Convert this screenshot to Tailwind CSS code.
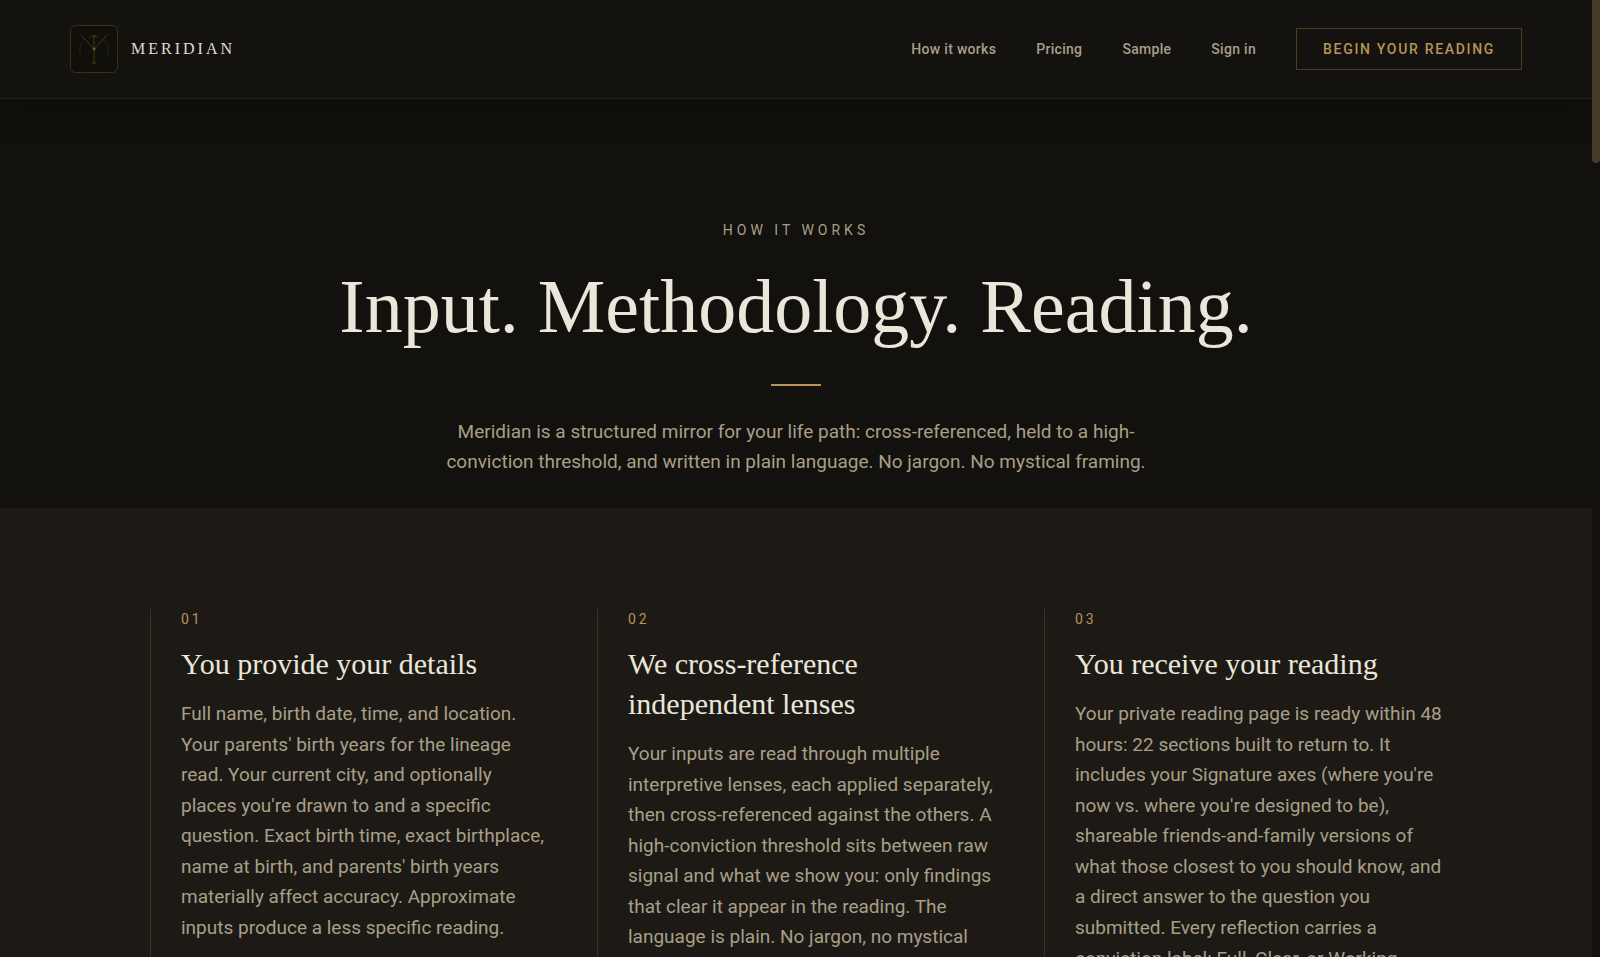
<!DOCTYPE html>
<html lang="en">
<head>
    <meta charset="UTF-8">
    <meta name="viewport" content="width=device-width, initial-scale=1.0">
    <title>Meridian - How it works</title>
    <script src="https://cdn.jsdelivr.net/npm/@tailwindcss/browser@4"></script>
</head>
<body class="bg-[#12110d] text-[#a89f88] font-['Roboto',sans-serif] h-screen overflow-hidden flex">
    <div class="flex-1 min-w-0">
        <header class="flex items-center justify-between px-[70px] py-[25px] bg-[#13120e] border-b border-[#23211b] shadow-[0_8px_32px_rgba(0,0,0,0.3)]">
            <a href="#" class="flex items-center gap-[13px]">
                <span class="w-12 h-12 rounded-md border border-[#353024] bg-[#110f0a] shadow-[0_0_24px_rgba(60,40,5,0.2)] flex items-center justify-center">
                    <svg class="w-9 h-9" viewBox="0 0 36 36" fill="none" stroke="#403a12" stroke-linecap="round">
                        <path d="M8 8.500A14 14 0 0 0 5 25M28 8.500A14 14 0 0 1 31 25" stroke="#252212"/>
                        <path d="M13 6A14 14 0 0 1 23 6" stroke="#252212"/>
                        <path d="M18 4V32M16 32H20M16 5H20"/>
                        <path d="M5 4L18 18L31 4"/>
                        <circle cx="18" cy="18" r="1" fill="#6e6214" stroke="#6e6214"/>
                    </svg>
                </span>
                <span class="font-['Liberation_Serif',serif] text-base tracking-[3px] text-[#e0dccf]">MERIDIAN</span>
            </a>
            <nav class="flex items-center gap-10 text-sm font-medium tracking-[0.3px]">
                <a href="#how">How it works</a>
                <a href="#pricing">Pricing</a>
                <a href="#sample">Sample</a>
                <a href="#signin">Sign in</a>
                <button type="button" class="h-[42px] px-[26px] border border-[#4a3d22] text-[#b8935a] text-sm font-medium tracking-[0.12em]">BEGIN YOUR READING</button>
            </nav>
        </header>

        <main>
            <section id="how" class="flex flex-col items-center text-center pt-[121px] pb-[31px]">
                <p class="text-sm leading-5 tracking-[4px]">HOW IT WORKS</p>
                <h1 class="mt-6 font-['Liberation_Serif',serif] text-[76px] leading-[84px] text-[#ebe6da]">Input. Methodology. Reading.</h1>
                <div class="mt-9 w-[50px] h-[2px] bg-[#b8935a]"></div>
                <p class="mt-[31px] max-w-[720px] text-[19px] leading-[30px]">Meridian is a structured mirror for your life path: cross-referenced, held to a high-conviction threshold, and written in plain language. No jargon. No mystical framing.</p>
            </section>

            <section class="bg-[#1d1a15] pt-[101px] pb-24 px-8">
                <div class="max-w-[1292px] mx-auto grid grid-cols-3 gap-[49px]">
                    <article class="border-l border-[#3a3424] pl-[30px]">
                        <p class="text-sm leading-5 tracking-[3px] text-[#b8935a]">01</p>
                        <h2 class="mt-[15px] font-['Liberation_Serif',serif] text-[30px] leading-10 text-[#ebe6da]">You provide your details</h2>
                        <p class="mt-[15px] text-[19px] leading-[1.61]">Full name, birth date, time, and location. Your parents' birth years for the lineage read. Your current city, and optionally places you're drawn to and a specific question. Exact birth time, exact birthplace, name at birth, and parents' birth years materially affect accuracy. Approximate inputs produce a less specific reading.</p>
                    </article>
                    <article class="border-l border-[#3a3424] pl-[30px]">
                        <p class="text-sm leading-5 tracking-[3px] text-[#b8935a]">02</p>
                        <h2 class="mt-[15px] font-['Liberation_Serif',serif] text-[30px] leading-10 text-[#ebe6da]">We cross-reference independent lenses</h2>
                        <p class="mt-[15px] text-[19px] leading-[1.61]">Your inputs are read through multiple interpretive lenses, each applied separately, then cross-referenced against the others. A high-conviction threshold sits between raw signal and what we show you: only findings that clear it appear in the reading. The language is plain. No jargon, no mystical framing.</p>
                    </article>
                    <article class="border-l border-[#3a3424] pl-[30px]">
                        <p class="text-sm leading-5 tracking-[3px] text-[#b8935a]">03</p>
                        <h2 class="mt-[15px] font-['Liberation_Serif',serif] text-[30px] leading-10 text-[#ebe6da]">You receive your reading</h2>
                        <p class="mt-[15px] text-[19px] leading-[1.61]">Your private reading page is ready within 48 hours: 22 sections built to return to. It includes your Signature axes (where you're now vs. where you're designed to be), shareable friends-and-family versions of what those closest to you should know, and a direct answer to the question you submitted. Every reflection carries a conviction label: Full, Clear, or Working.</p>
                    </article>
                </div>
            </section>
        </main>
    </div>

    <!-- scroll track -->
    <div class="w-2 shrink-0 bg-[#12110d]">
        <div class="h-[163px] rounded-b bg-[#463b28]"></div>
    </div>
</body>
</html>
